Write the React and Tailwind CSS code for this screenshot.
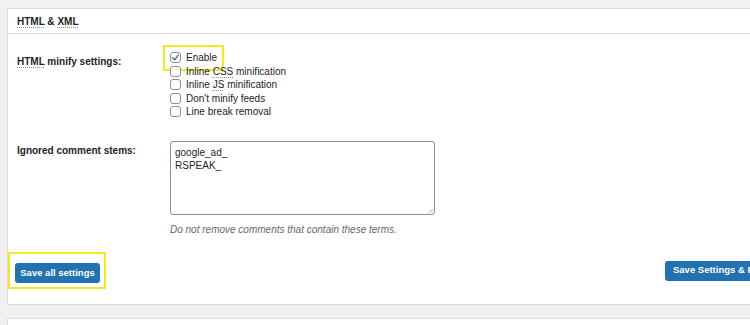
import React from "react";

function Box({ checked }) {
  return (
    <span className="flex h-[11px] w-[11px] shrink-0 items-center justify-center rounded-[3px] border border-[#8c8f94] bg-white">
      {checked && (
        <svg viewBox="0 0 12 12" className="h-[9px] w-[9px]">
          <path d="M2.2 6.4 4.9 9 9.8 2.8" fill="none" stroke="#2271b1" strokeWidth="1.7" strokeLinecap="round" strokeLinejoin="round" />
        </svg>
      )}
    </span>
  );
}

function Abbr({ children }) {
  return <span className="underline decoration-dotted decoration-[#8c8f94] underline-offset-2">{children}</span>;
}

export default function App() {
  const options = [
    { label: "Enable", checked: true },
    { label: <>Inline <Abbr>CSS</Abbr> minification</> },
    { label: <>Inline <Abbr>JS</Abbr> minification</> },
    { label: "Don't minify feeds" },
    { label: "Line break removal" },
  ];

  return (
    <div className="h-[325px] overflow-hidden bg-[#f1f1f1] pl-[7px] pt-[8px] text-[#1d2327] [font-family:'Liberation_Sans',Arial,sans-serif]">
      <div className="w-[800px] border border-[#dcdcde] bg-white">
        <div className="flex h-[25px] items-center border-b border-[#dcdcde] px-[9px]">
          <h2 className="text-[10px] font-bold">
            <Abbr>HTML</Abbr> &amp; <Abbr>XML</Abbr>
          </h2>
        </div>

        <div className="px-[9px] pt-[17px]">
          {/* HTML minify */}
          <div className="grid grid-cols-[153px_1fr]">
            <div className="pt-[4px] text-[10px] font-bold leading-[13px]">
              <Abbr>HTML</Abbr> minify settings:
            </div>
            <div className="flex flex-col">
              {options.map((o, i) => (
                <label key={i} className="relative flex h-[13.5px] items-center gap-[5px] text-[10px]">
                  <Box checked={o.checked} />
                  <span>{o.label}</span>
                  {i === 0 && (
                    <span className="absolute -left-[7px] -top-[6px] h-[26px] w-[61px] border-2 border-[#f2ea1d]" />
                  )}
                </label>
              ))}
            </div>
          </div>

          {/* Ignored comment stems */}
          <div className="mt-[22px] grid grid-cols-[153px_1fr]">
            <div className="pt-[3px] text-[10px] font-bold leading-[13px]">Ignored comment stems:</div>
            <div>
              <div className="relative h-[74px] w-[265px] rounded-[3px] border border-[#8c8f94] px-[4px] pt-[4px] text-[10px] leading-[13px]">
                <div>google_ad_</div>
                <div>RSPEAK_</div>
                <svg viewBox="0 0 6 6" className="absolute bottom-[1px] right-[1px] h-[5px] w-[5px]">
                  <path d="M6 1 1 6M6 4 4 6" stroke="#8c8f94" strokeWidth="0.8" />
                </svg>
              </div>
              <p className="mt-[8px] text-[10px] italic leading-[13px] text-[#646970]">
                Do not remove comments that contain these terms.
              </p>
            </div>
          </div>

          {/* Buttons */}
          <div className="-ml-[2px] mt-[23px] flex items-center justify-between pb-[21px] pr-[12px]">
            <div className="relative">
              <button className="h-[20px] w-[85px] rounded-[3px] bg-[#2271b1] text-[9.5px] font-bold text-white">
                Save all settings
              </button>
              <span className="absolute -bottom-[6px] -left-[7px] -right-[6px] -top-[7px] border-2 border-[#f2ea1d]" />
            </div>
            <button className="h-[20px] w-[120px] rounded-[3px] bg-[#2271b1] pl-[8px] text-left text-[9.5px] font-bold text-white">
              Save Settings &amp; Purge
            </button>
          </div>
        </div>
      </div>

      <div className="mt-[13px] h-[40px] w-[800px] border border-[#dcdcde] bg-white" />
    </div>
  );
}
